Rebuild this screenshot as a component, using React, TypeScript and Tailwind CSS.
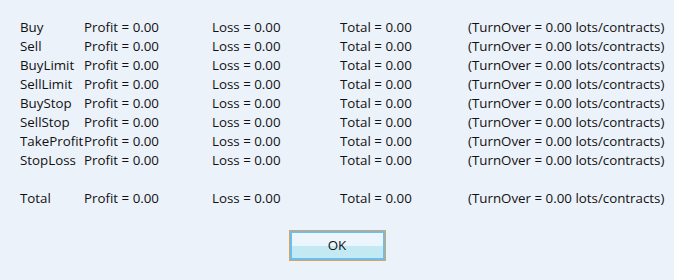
const rows = ["Buy", "Sell", "BuyLimit", "SellLimit", "BuyStop", "SellStop", "TakeProfit", "StopLoss"];

function Row({ label }: { label: string }) {
  return (
    <div className="grid grid-cols-[64px_128px_128px_128px_auto] h-[19px] items-center whitespace-nowrap">
      <span>{label}</span>
      <span>Profit = 0.00</span>
      <span>Loss = 0.00</span>
      <span>Total = 0.00</span>
      <span>(TurnOver = 0.00 lots/contracts)</span>
    </div>
  );
}

export default function App() {
  return (
    <div
      className="w-[674px] h-[280px] bg-[#ecf2fa] text-[#111] text-[13.33px] leading-[19px] pt-[18px] pl-[20px] flex flex-col"
      style={{ fontFamily: "'Open Sans', 'Noto Sans', sans-serif" }}
    >
      {rows.map((r) => (
        <Row key={r} label={r} />
      ))}
      <div className="h-[19px]" />
      <Row label="Total" />
      <div className="flex justify-center mt-[22px] pr-[20px]">
        <button className="w-[97px] h-[31px] border border-[#d8a35c] p-0 bg-[#63b9ee]">
          <div className="h-full border-2 border-[#6cbdf0] flex flex-col relative">
            <div className="flex-1 bg-[#ecf4fc]" />
            <div className="flex-1 bg-[#c3eaf3]" />
            <span className="absolute inset-0 flex items-center justify-center leading-none">OK</span>
          </div>
        </button>
      </div>
    </div>
  );
}
